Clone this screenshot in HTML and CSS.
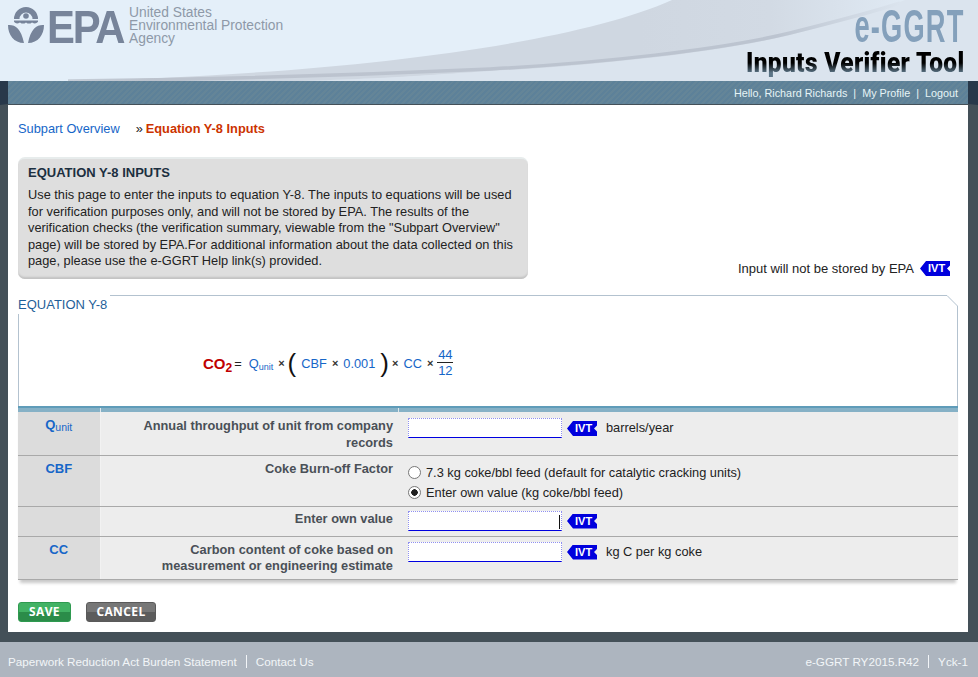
FILE: index.html
```html
<!DOCTYPE html>
<html lang="en">
<head>
<meta charset="utf-8">
<title>Equation Y-8 Inputs</title>
<link rel="stylesheet" href="styles.css">
</head>
<body>
<header class="masthead">
  <svg class="swoosh" viewBox="0 0 978 81" preserveAspectRatio="none" aria-hidden="true">
    <defs>
      <linearGradient id="gray" gradientUnits="userSpaceOnUse" x1="640" y1="0" x2="900" y2="0">
        <stop offset="0" stop-color="#cfd7e1"/><stop offset=".5" stop-color="#d2dae4"/><stop offset="1" stop-color="#dfe9f3"/>
      </linearGradient>
      <linearGradient id="band" gradientUnits="userSpaceOnUse" x1="68" y1="0" x2="900" y2="0">
        <stop offset="0" stop-color="#c6ced8"/><stop offset=".1" stop-color="#bcc3ce"/><stop offset=".85" stop-color="#bcc4d0"/><stop offset="1" stop-color="#dbe4ee"/>
      </linearGradient>
    </defs>
    <path d="M68 81C300 76 560 50 672 0H930L890 81Z" fill="url(#gray)"/>
    <path d="M300 81C400 78 440 74 490 71C600 65 720 52 790 35C840 22 875 12 905 0H978V81Z" fill="#dbe4ee"/>
    <path d="M68 81C250 79 380 74 490 69C600 63 720 50 790 33C830 23 870 13 900 3" fill="none" stroke="url(#band)" stroke-width="3.500"/>
  </svg>
  <a class="epa" href="#">
    <svg class="seal" viewBox="0 0 36 36" aria-hidden="true">
      <path d="M6 12A12 12 0 0 1 30 12H24.500A6.500 6.500 0 0 0 11.500 12Z" fill="#77849a"/>
      <circle cx="18" cy="9" r="2.800" fill="#77849a"/>
      <path d="M6 13.500h24v1.300c-2 2-3.500 2-6 .6-2 1.600-4 1.600-6 0-2 1.600-4 1.600-6 0-2.500 1.400-4 1.400-6-.6Z" fill="#77849a"/>
      <path d="M0 18C7 17.500 13 21 16 36C6 36 0 28 0 18ZM36 18C29 17.500 23 21 20 36C30 36 36 28 36 18Z" fill="#77849a"/>
    </svg>
    <span class="epa-word">EPA</span>
    <span class="epa-name">United States<br>Environmental Protection<br>Agency</span>
  </a>
  <div class="brand">
    <div class="brand-top">e-GGRT</div>
    <div class="brand-sub">Inputs Verifier Tool</div>
  </div>
</header>
<nav class="userbar">
  <span>Hello, Richard Richards</span><span class="sep">|</span><a href="#">My Profile</a><span class="sep">|</span><a href="#">Logout</a>
</nav>
<main class="page">
  <div class="crumbs"><a href="#">Subpart Overview</a><span class="arrows">»</span><strong>Equation Y-8 Inputs</strong></div>
  <div class="intro-row">
    <section class="intro">
      <h1>EQUATION Y-8 INPUTS</h1>
      <p>Use this page to enter the inputs to equation Y-8. The inputs to equations will be used for verification purposes only, and will not be stored by EPA. The results of the verification checks (the verification summary, viewable from the "Subpart Overview" page) will be stored by EPA.For additional information about the data collected on this page, please use the e-GGRT Help link(s) provided.</p>
    </section>
    <div class="legend">Input will not be stored by EPA <span class="ivt">IVT</span></div>
  </div>
  <section class="equation">
    <svg class="outline" viewBox="0 0 940 111" aria-hidden="true">
      <path d="M0.500 111V19M92 0.500H929L939.500 11V111" fill="none" stroke="#b3c2cf"/>
    </svg>
    <h2>EQUATION Y-8</h2>
    <div class="formula">
      <span class="co2">CO<sub>2</sub></span>
      <span class="eq">=</span>
      <span class="var">Q<sub>unit</sub></span>
      <span class="op">×</span>
      <span class="paren">(</span>
      <span class="var">CBF</span>
      <span class="op">×</span>
      <span class="var">0.001</span>
      <span class="paren">)</span>
      <span class="op">×</span>
      <span class="var">CC</span>
      <span class="op">×</span>
      <span class="frac"><span>44</span><span class="den">12</span></span>
    </div>
  </section>
  <table class="inputs">
    <colgroup><col class="c1"><col class="c2"><col></colgroup>
    <thead><tr><th></th><th></th><th></th></tr></thead>
    <tbody>
      <tr class="r1">
        <td class="sym">Q<sub>unit</sub></td>
        <td class="lbl">Annual throughput of unit from company records</td>
        <td class="val"><span class="field"><input type="text" aria-label="Qunit"><span class="ivt">IVT</span><span class="unit">barrels/year</span></span></td>
      </tr>
      <tr class="r2">
        <td class="sym">CBF</td>
        <td class="lbl">Coke Burn-off Factor</td>
        <td class="val">
          <div class="radios">
            <label><input type="radio" name="cbf">7.3 kg coke/bbl feed (default for catalytic cracking units)</label>
            <label><input type="radio" name="cbf" checked>Enter own value (kg coke/bbl feed)</label>
          </div>
        </td>
      </tr>
      <tr class="r3">
        <td class="sym"></td>
        <td class="lbl">Enter own value</td>
        <td class="val"><span class="field"><span class="caret-wrap"><input type="text" aria-label="Own value"><i class="caret"></i></span><span class="ivt">IVT</span></span></td>
      </tr>
      <tr class="r4">
        <td class="sym">CC</td>
        <td class="lbl">Carbon content of coke based on<br>measurement or engineering estimate</td>
        <td class="val"><span class="field"><input type="text" aria-label="CC"><span class="ivt">IVT</span><span class="unit">kg C per kg coke</span></span></td>
      </tr>
    </tbody>
  </table>
  <div class="actions">
    <button class="btn save" type="button">SAVE</button>
    <button class="btn cancel" type="button">CANCEL</button>
  </div>
</main>
<footer class="foot">
  <div class="foot-links"><a href="#">Paperwork Reduction Act Burden Statement</a><a href="#">Contact Us</a></div>
  <div class="foot-links"><span>e-GGRT RY2015.R42</span><span>Yck-1</span></div>
</footer>
</body>
</html>
```
FILE: styles.css
```css
* { box-sizing: border-box; }
html, body { height: 100%; }
body {
  margin: 0;
  height: 677px;
  overflow: hidden;
  background: #445058;
  font-family: "Liberation Sans", Arial, sans-serif;
  font-size: 12.800px;
  color: #222;
  display: flex;
  flex-direction: column;
}
a { color: inherit; text-decoration: none; }

.masthead {
  position: relative;
  height: 81px;
  flex: none;
  background: #e4eff9;
  display: flex;
  justify-content: space-between;
  overflow: hidden;
}
.swoosh { position: absolute; inset: 0; width: 100%; height: 100%; }
.epa {
  position: relative;
  display: flex;
  align-items: flex-start;
  padding: 7px 0 0 8px;
}
.seal { width: 36px; height: 36px; flex: none; }
.epa-word {
  width: 76px;
  margin: -4px 0 0 3px;
  font-size: 47px;
  line-height: 47px;
  font-weight: 700;
  letter-spacing: -2.500px;
  color: #77849a;
  transform: scaleX(.89);
  transform-origin: left center;
}
.epa-name {
  margin: -1px 0 0 6px;
  font-size: 13.800px;
  line-height: 13px;
  color: #8e99a8;
}
.brand {
  position: relative;
  padding: 4px 14px 0 0;
  text-align: right;
}
.brand-top {
  font-weight: 700;
  font-size: 47px;
  line-height: 43px;
  letter-spacing: 2px;
  color: #84a0bb;
  transform: scaleX(.58);
  transform-origin: right center;
}
.brand-sub {
  margin-top: 2px;
  font-family: Roboto, "Liberation Sans", sans-serif;
  font-weight: 900;
  font-size: 27px;
  line-height: 28px;
  letter-spacing: .4px;
  white-space: nowrap;
  background: linear-gradient(#000 50%, #5d7688 85%);
  -webkit-background-clip: text;
  background-clip: text;
  color: transparent;
  transform: scaleX(.905);
  transform-origin: right center;
}

.userbar {
  height: 24px;
  flex: none;
  display: flex;
  justify-content: flex-end;
  align-items: center;
  padding: 0 10px 0 0;
  font-size: 10.800px;
  color: #e6f4f6;
  background: repeating-linear-gradient(135deg, #5d8199 0 2px, #648598 2px 4px);
  background-color: #628497;
  border-left: 8px solid #28384a;
  border-right: 10px solid #28384a;
  border-bottom: 1px solid #445058;
}
.userbar .sep { margin: 0 6px; }

.page {
  flex: none;
  height: 527px;
  margin: 0 10px 0 8px;
  padding: 15px 10px 0;
  background: #fff;
}
.crumbs {
  display: flex;
  align-items: baseline;
  height: 18px;
  line-height: 18px;
  color: #1666c8;
}
.arrows { margin-left: 16px; color: #222; width: 10px; }
.crumbs strong { color: #cc3300; font-weight: 700; }

.intro-row {
  display: flex;
  justify-content: space-between;
  align-items: flex-end;
  margin-top: 19px;
}
.intro {
  width: 510px;
  height: 122px;
  padding: 6px 10px 0;
  background: #dedede;
  border-radius: 7px;
  border-top: 2px solid #e7ecec;
  box-shadow: inset 0 -3px 2px -1px #c2c2c2;
}
.intro h1 {
  margin: 0 0 6px;
  font-size: 13px;
  line-height: 16px;
  color: #1c2f40;
  font-weight: 700;
}
.intro p { margin: 0; line-height: 16.500px; }
.legend {
  display: flex;
  align-items: center;
  gap: 6px;
  margin: 0 8px 3px 0;
  font-size: 13px;
}
.ivt {
  display: inline-block;
  width: 30px;
  height: 15px;
  padding-left: 8px;
  font-size: 11px;
  line-height: 15px;
  font-weight: 700;
  color: #fff;
  background: #0000dd;
  clip-path: polygon(0 50%, 6px 0, 100% 0, 100% 30%, 27px 50%, 100% 70%, 100% 100%, 6px 100%);
  flex: none;
}

.equation {
  position: relative;
  height: 111px;
  margin-top: 16px;
}
.outline { position: absolute; inset: 0; width: 100%; height: 100%; }
.equation h2 {
  margin: 0;
  padding-top: 1px;
  font-size: 13px;
  font-weight: 400;
  line-height: 17px;
  color: #1f5f99;
}
.formula {
  display: flex;
  align-items: center;
  gap: 5px;
  margin: 32px 0 0 185px;
  height: 36px;
  color: #1666c8;
}
.co2 { font-size: 15px; font-weight: 700; color: #c00000; margin-right: -3px; }
.co2 sub { font-size: 12px; vertical-align: -3px; line-height: 0; }
.eq { color: #222; margin-right: 2px; }
.var sub { font-size: 9px; vertical-align: -2px; line-height: 0; }
.op { color: #333; font-weight: 700; font-size: 11px; }
.paren { font-size: 26px; line-height: 26px; color: #111; margin: -1px 0 0; }
.var + .op + .paren { margin-left: -2px; }
.paren + .op { margin-left: -2px; }
.frac { display: inline-flex; flex-direction: column; margin-left: -1px; text-align: center; line-height: 14px; width: 16px; font-size: 13px; }
.frac .den { border-top: 1px solid #222; padding-top: 1px; }

.inputs {
  width: 940px;
  border-collapse: collapse;
  table-layout: fixed;
  box-shadow: 0 5px 3px -2px #c9c9c9;
}
.c1 { width: 82px; }
.c2 { width: 298px; }
.inputs th {
  height: 5px;
  padding: 0;
  background: #86b1c6;
  border-top: 2px solid #5f9cb9;
  border-left: 1px solid #e0e8ec;
}
.inputs th:first-child { border-left: 0; }
.inputs td {
  padding: 0;
  vertical-align: top;
  border-bottom: 1px solid #a9a9a9;
  background: #ededed;
  line-height: 16.500px;
}
.r1 td { height: 43px; }
.r2 td { height: 51px; }
.r3 td { height: 30px; }
.r4 td { height: 43px; }
.inputs .sym {
  padding-top: 5px;
  text-align: center;
  font-size: 13px;
  font-weight: 700;
  color: #1666c8;
  background: #dcdcdc;
  border-right: 1px solid #f2f2f2;
}
.sym sub { font-size: 10.500px; font-weight: 400; vertical-align: -2px; line-height: 0; }
.inputs .lbl {
  padding: 5px 5px 0 0;
  text-align: right;
  font-weight: 700;
  color: #4a5057;
}
.inputs .val { padding: 5px 0 0 10px; }
.inputs .r3 .lbl, .inputs .r3 .val { padding-top: 4px; }
.inputs .r1 .val, .inputs .r1 .lbl { padding-top: 6px; }
.field { display: flex; align-items: flex-start; gap: 5px; }
.field input {
  display: block;
  width: 154px;
  height: 20px;
  margin: 0;
  padding: 0;
  background: #fff;
  border: 1px dotted #9090f0;
  border-bottom: 1px solid #0000e0;
  outline: 0;
}
.field .ivt { margin-top: 3px; }
.unit { margin-left: 4px; line-height: 20px; }
.caret-wrap { position: relative; display: block; }
.caret { position: absolute; right: 2px; top: 4px; width: 1px; height: 14px; background: #111; }
.radios { display: flex; flex-direction: column; gap: 3px; padding-top: 4px; }
.radios label { display: flex; align-items: center; gap: 5px; height: 17px; }
.radios input {
  appearance: none;
  margin: 0 0 1px;
  width: 13px;
  height: 13px;
  flex: none;
  border: 1px solid #777;
  border-radius: 50%;
  background: #fff;
}
.radios input:checked { background: radial-gradient(circle, #222 0 3px, #fff 3.500px); }

.actions { display: flex; gap: 15px; margin-top: 22px; }
.btn {
  height: 20px;
  padding: 0;
  border-radius: 3px;
  font-family: "Open Sans", "Liberation Sans", sans-serif;
  font-size: 12px;
  font-weight: 700;
  letter-spacing: .4px;
  color: #fff;
}
.save { width: 53px; background: linear-gradient(#42b264 50%, #2b8c49 50%); border: 1px solid #2f9a50; }
.cancel { width: 70px; background: linear-gradient(#777 50%, #5c5c5c 50%); border: 1px solid #5a5a5a; }

.foot {
  margin-top: 10px;
  flex: 1;
  display: flex;
  justify-content: space-between;
  align-items: center;
  padding: 4px 10px 0 8px;
  font-size: 11.700px;
  background: #adb5bf;
  color: #f2f5f8;
}
.foot-links { display: flex; }
.foot-links > * + * { margin-left: 9px; padding-left: 9px; border-left: 1px solid #f2f5f8; }
```
